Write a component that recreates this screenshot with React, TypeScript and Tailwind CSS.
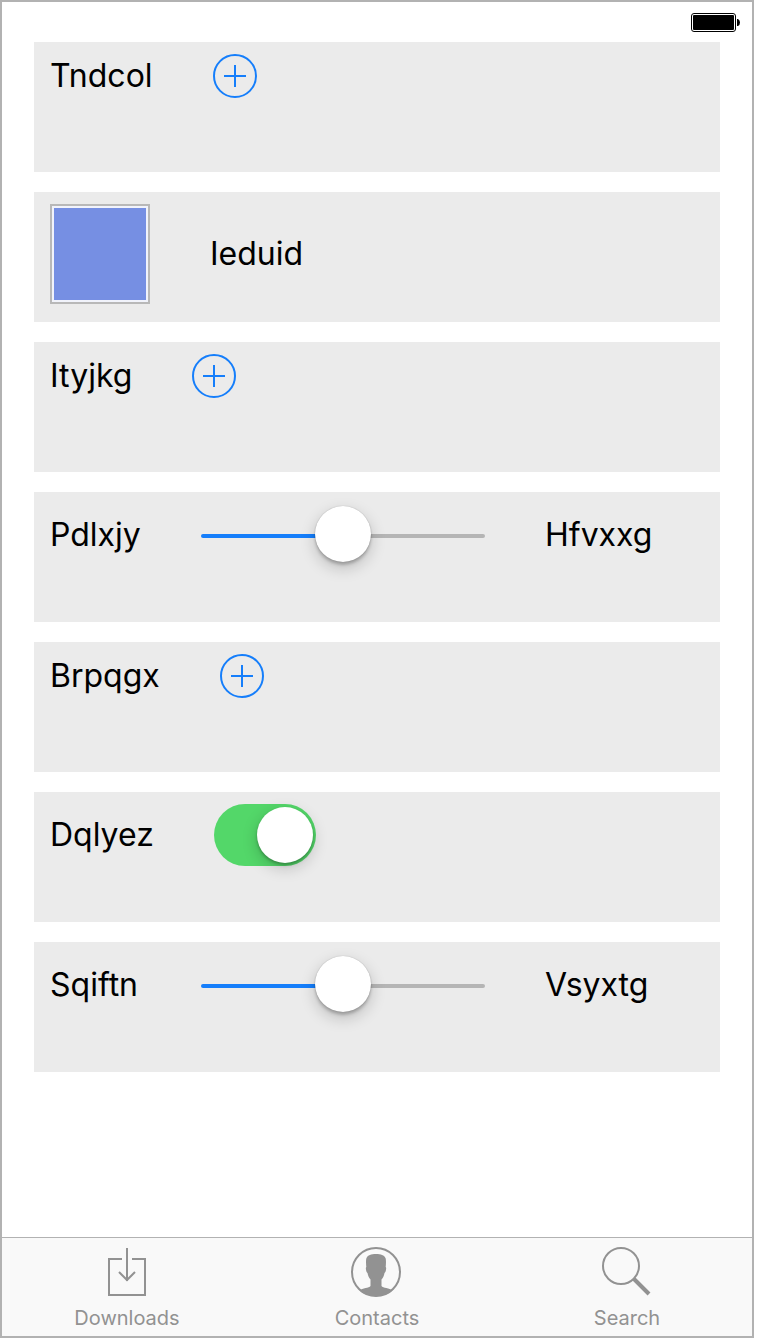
import { useState } from "react";
import type { CSSProperties, ReactNode } from "react";

function Row({ children }: { children: ReactNode }) {
  return (
    <section className="flex h-[130px] items-start bg-[#ebebeb] px-4 py-3">
      <div className="flex items-center gap-[60px]">{children}</div>
    </section>
  );
}

function AddRow({ label }: { label: string }) {
  return (
    <Row>
      <span>{label}</span>
      <button type="button" aria-label={`Add ${label}`} className="text-[#157efb]">
        <svg viewBox="0 0 44 44" className="size-11" fill="none" stroke="currentColor" strokeWidth="2">
          <circle cx="22" cy="22" r="21" />
          <path d="M22 11v22M11 22h22" />
        </svg>
      </button>
    </Row>
  );
}

function SliderRow({ id, label, value }: { id: string; label: string; value: string }) {
  const [amount, setAmount] = useState(50);
  return (
    <Row>
      <label htmlFor={id} className="min-w-[91px]">{label}</label>
      <input
        id={id}
        type="range"
        value={amount}
        onChange={(e) => setAmount(Number(e.target.value))}
        style={{ "--fill": `${amount}%` } as CSSProperties}
        className="h-[62px] w-[284px] appearance-none bg-transparent pt-0.5 [&::-webkit-slider-runnable-track]:h-1 [&::-webkit-slider-runnable-track]:rounded-full [&::-webkit-slider-runnable-track]:bg-[linear-gradient(to_right,#157efb_var(--fill),#b5b5b5_var(--fill))] [&::-webkit-slider-thumb]:-mt-7 [&::-webkit-slider-thumb]:size-14 [&::-webkit-slider-thumb]:appearance-none [&::-webkit-slider-thumb]:rounded-full [&::-webkit-slider-thumb]:bg-white [&::-webkit-slider-thumb]:shadow-[0_0_1px_rgba(0,0,0,0.3),0_3px_3px_rgba(0,0,0,0.2),0_6px_16px_rgba(0,0,0,0.2)]"
      />
      <output htmlFor={id}>{value}</output>
    </Row>
  );
}

function SwitchRow({ id, label }: { id: string; label: string }) {
  return (
    <Row>
      <label htmlFor={id}>{label}</label>
      <input
        id={id}
        type="checkbox"
        role="switch"
        defaultChecked
        className="flex h-[62px] w-[102px] appearance-none items-center rounded-full bg-[#d1d1d1] px-[3px] before:size-14 before:rounded-full before:bg-white before:shadow-[0_2px_3px_rgba(0,0,0,0.25),0_5px_16px_rgba(0,0,0,0.2)] checked:justify-end checked:bg-[#53d769]"
      />
    </Row>
  );
}

function Tab({ label, children }: { label: string; children: ReactNode }) {
  return (
    <a href={`#${label.toLowerCase()}`} className="flex flex-1 flex-col items-center gap-2 pt-2">
      <svg viewBox="0 0 52 52" className="size-[52px]" fill="none" stroke="currentColor" strokeWidth="2">
        {children}
      </svg>
      <span className="text-[20px] leading-6">{label}</span>
    </a>
  );
}

export default function App() {
  return (
    <div className="mr-1.5 mb-0.5 flex min-h-[calc(100vh-2px)] flex-col border-2 border-[#b2b2b2] bg-white font-['Inter','Liberation_Sans',sans-serif] text-[32px] leading-[42px] text-black">
      <header className="flex h-10 items-start justify-end pt-[11px] pr-3">
        <svg viewBox="0 0 49 19" className="h-[19px] w-[49px]" role="img" aria-label="Battery full">
          <rect x="0.5" y="0.5" width="44" height="18" rx="2.5" fill="none" stroke="black" />
          <rect x="2" y="2" width="41" height="15" rx="1" fill="black" />
          <path d="M46 6h1q2 1 2 3.500t-2 3.500h-1z" fill="black" />
        </svg>
      </header>
      <main className="flex flex-1 flex-col gap-5 px-8">
        <AddRow label="Tndcol" />
        <Row>
          <div className="size-[100px] border-2 border-[#b8b8b8] bg-[#f1f3fb] p-0.5">
            <div className="size-full bg-[#768fe3]" />
          </div>
          <span>Ieduid</span>
        </Row>
        <AddRow label="Ityjkg" />
        <SliderRow id="pdlxjy" label="Pdlxjy" value="Hfvxxg" />
        <AddRow label="Brpqgx" />
        <SwitchRow id="dqlyez" label="Dqlyez" />
        <SliderRow id="sqiftn" label="Sqiftn" value="Vsyxtg" />
      </main>
      <nav className="flex h-[99px] border-t border-[#b2b2b2] bg-[#f9f9f9] text-[#929292]">
        <Tab label="Downloads">
          <path d="M21 13H8v36h36V13H31M26 2v33M18 26l8 8 8-8" />
        </Tab>
        <Tab label="Contacts">
          <circle cx="25" cy="26" r="24" />
          <path
            d="M25 8c-5 0-8 1-9.500 4-.7 2-.5 6-.2 9-1 .8-.3 5 1.200 6 .5 3 1.500 5 3 6.500v6.500c-1.500 2-8 2-11 4.500C13 48.500 19 50 25 50s12-1.500 16.500-5.500c-3-2.500-9.500-2.500-11-4.500v-6.500c1.500-1.500 2.500-3.500 3-6.500 1.500-1 2.200-5.200 1.200-6 .3-3 .5-7-.2-9C33 9 30 8 25 8z"
            fill="currentColor"
            stroke="none"
          />
        </Tab>
        <Tab label="Search">
          <circle cx="20" cy="20" r="18" />
          <path d="M33 33l15 15" strokeWidth="4" />
        </Tab>
      </nav>
    </div>
  );
}
